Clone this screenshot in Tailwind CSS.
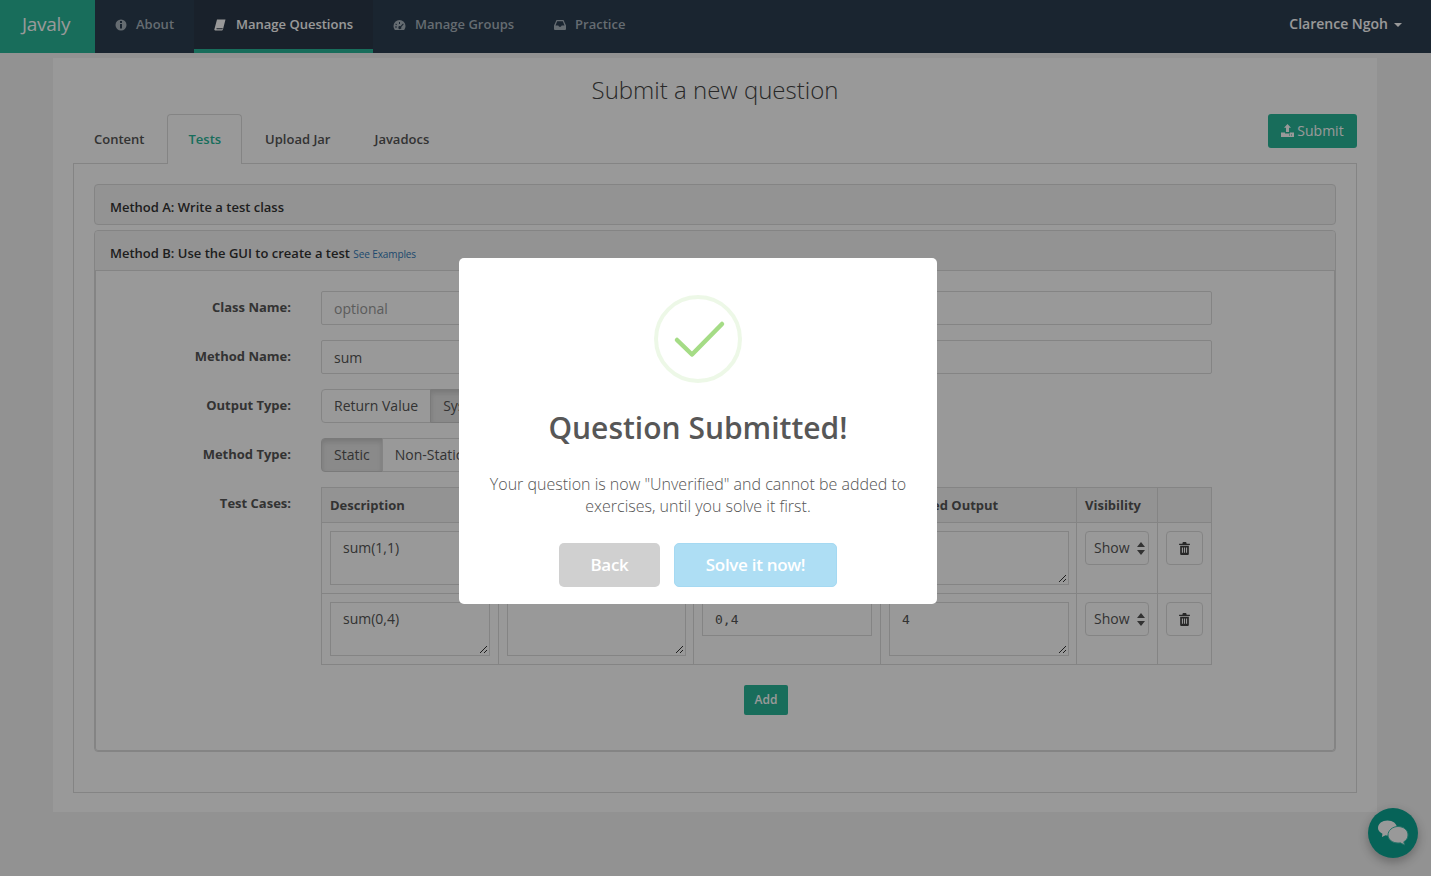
<!DOCTYPE html>
<html lang="en">
<head>
    <meta charset="UTF-8">
    <meta name="viewport" content="width=device-width, initial-scale=1.0">
    <title>Javaly - Submit a new question</title>
    <script src="https://cdn.jsdelivr.net/npm/@tailwindcss/browser@4"></script>
</head>
<body class="bg-[#f4f4f4] h-screen overflow-hidden font-['Open_Sans',sans-serif] text-[#444]">
    <!-- navbar -->
    <nav class="bg-[#2c3e50] h-[53px] flex text-[13px] font-semibold text-[#a9b4bd]">
        <a class="w-[95px] bg-[#28b698] text-[#fff] text-[19px] font-normal tracking-[-0.3px] pl-[22px] leading-[49px]">Javaly</a>
        <a class="flex items-center pl-[20px] pr-[20px] pb-[4px]">
            <svg class="w-[12px] h-[12px] mr-[9px]" viewBox="0 0 12 12"><circle cx="6" cy="6" r="5.5" fill="currentColor"/><rect x="5" y="2" width="2" height="2" fill="#2c3e50"/><rect x="5" y="5" width="2" height="4.5" fill="#2c3e50"/></svg>
            About
        </a>
        <a class="flex items-center w-[179px] pl-[20px] bg-[#2b3848] border-b-[4px] border-[#28b698] text-[#fff]">
            <svg class="w-[12px] h-[12px] mr-[10px]" viewBox="0 0 12 12"><path d="M3 .5h8.500L9 10.200c-.2.8-.7 1.300-1.600 1.300H1.200C.5 11.500.2 11 .4 10.300zM2.600 9.300c-.4.600 0 1 .6 1h5.300l.3-1z" fill="currentColor" fill-rule="evenodd"/></svg>
            Manage Questions
        </a>
        <a class="flex items-center pl-[20px] pr-[20px] pb-[4px]">
            <svg class="w-[13px] h-[12px] mr-[9px]" viewBox="0 0 13 12"><path d="M6.500 1A6 6 0 0 0 .5 7c0 1.500.5 2.800 1.400 4h9.200c.9-1.200 1.400-2.500 1.400-4a6 6 0 0 0-6-6zM6 3h1v2H6zM3 4.500l1 1-.7.7-1-1zM10 4.500l.7.7-2.500 2.700a1.500 1.500 0 1 1-.8-.7zM2 7.500h2v1H2z" fill="currentColor" fill-rule="evenodd"/></svg>
            Manage Groups
        </a>
        <a class="flex items-center pl-[20px] pb-[4px]">
            <svg class="w-[12px] h-[11px] mr-[9px]" viewBox="0 0 12 11"><path d="M2.500 1h7L12 6.500V10a1 1 0 0 1-1 1H1a1 1 0 0 1-1-1V6.500zM3.200 2.200 1.500 6.500h2.800l.8 1.300h1.800l.8-1.300h2.800L8.800 2.200z" fill="currentColor" fill-rule="evenodd"/></svg>
            Practice
        </a>
        <div class="ml-auto flex items-center pr-[29px] text-[14px] text-[#fff] pb-[6px]">
            Clarence Ngoh
            <span class="ml-[6px] mt-[2px] border-x-[4px] border-x-transparent border-t-[4px] border-t-[#fff]"></span>
        </div>
    </nav>

    <main class="w-[1324px] h-[754px] ml-[53px] mt-[5px] bg-white px-[20px] pt-[15px]">
        <h1 class="text-center text-[24px] font-light leading-[34px] text-[#444]">Submit a new question</h1>

        <div class="flex justify-between items-start mt-[7px] h-[50px]">
            <div class="flex text-[13px] font-semibold h-[50px]">
                <a class="px-[21px] mr-[2px] leading-[50px] text-[#555]">Content</a>
                <a class="px-[20px] mr-[2px] leading-[48px] h-[50px] border border-b-0 border-[#ddd] rounded-t-[4px] bg-white text-[#28b698] relative">Tests</a>
                <a class="px-[21px] mr-[2px] leading-[50px] text-[#555]">Upload Jar</a>
                <a class="px-[21px] leading-[50px] text-[#555]">Javadocs</a>
            </div>
            <button class="w-[89px] h-[34px] pb-[1px] bg-[#28b698] rounded-[3px] text-white text-[14px] font-medium flex items-center justify-center gap-[3px]">
                <svg class="w-[13px] h-[13px]" viewBox="0 0 13 13"><path d="M6.500 0 10 3.800H8V8H5V3.800H3zM0 8.500h4V9.500h5V8.500h4V13H0zM10 10.500h1v1h-1zM8 10.500h1v1H8z" fill="currentColor" fill-rule="evenodd"/></svg>
                Submit
            </button>
        </div>

        <div class="h-[630px] -mt-[1px] border border-[#ddd] px-[20px] pt-[20px]">
            <div class="h-[41px] border border-[#ddd] rounded-[4px] bg-[#f5f5f5] pl-[15px] text-[13px] font-semibold leading-[45px] text-[#333]">Method A: Write a test class</div>

            <div class="h-[522px] mt-[5px] border border-[#ddd] rounded-[4px] bg-white">
                <div class="h-[40px] border-b border-[#ddd] bg-[#f5f5f5] rounded-t-[4px] pl-[15px] text-[13px] font-semibold leading-[45px] text-[#333]">Method B: Use the GUI to create a test <a class="text-[10px] font-normal tracking-[-0.1px] text-[#337ab7]">See Examples</a></div>

                <div class="h-[480px] border-x border-b border-[#ddd] rounded-b-[3px] pl-[225px] pt-[20px] relative">
                    <div class="flex h-[34px] mb-[15px]">
                        <label class="absolute left-0 w-[195px] text-right text-[13px] font-bold leading-[32px] text-[#555]">Class Name:</label>
                        <div class="w-[891px] h-[34px] border border-[#ddd] rounded-[2px] px-[12px] text-[14px] leading-[34px] text-[#999]">optional</div>
                    </div>
                    <div class="flex h-[34px] mb-[15px]">
                        <label class="absolute left-0 w-[195px] text-right text-[13px] font-bold leading-[32px] text-[#555]">Method Name:</label>
                        <div class="w-[891px] h-[34px] border border-[#ddd] rounded-[2px] px-[12px] text-[14px] leading-[34px] text-[#555]">sum</div>
                    </div>
                    <div class="flex h-[34px] mb-[15px]">
                        <label class="absolute left-0 w-[195px] text-right text-[13px] font-bold leading-[32px] text-[#555]">Output Type:</label>
                        <div class="flex text-[14px] leading-[32px] text-[#555]">
                            <span class="px-[12px] h-[34px] border border-[#ddd] rounded-l-[4px]">Return Value</span>
                            <span class="px-[12px] h-[34px] border border-[#ccc] bg-[#e6e6e6] shadow-[inset_0_3px_5px_rgba(0,0,0,0.125)] rounded-r-[4px] -ml-[1px]">System Out</span>
                        </div>
                    </div>
                    <div class="flex h-[34px] mb-[15px]">
                        <label class="absolute left-0 w-[195px] text-right text-[13px] font-bold leading-[32px] text-[#555]">Method Type:</label>
                        <div class="flex text-[14px] leading-[32px] text-[#555]">
                            <span class="px-[12px] h-[34px] border border-[#ccc] bg-[#e6e6e6] shadow-[inset_0_3px_5px_rgba(0,0,0,0.125)] rounded-l-[4px]">Static</span>
                            <span class="px-[12px] h-[34px] border border-[#ddd] rounded-r-[4px] -ml-[1px]">Non-Static</span>
                        </div>
                    </div>
                    <div class="flex">
                        <label class="absolute left-0 w-[195px] text-right text-[13px] font-bold leading-[32px] text-[#555]">Test Cases:</label>
                        <div class="w-[891px] border border-[#ddd] text-[14px] text-[#555]">
                            <div class="grid grid-cols-[176px_195px_187px_196px_81px_1fr] h-[35px] bg-[#f5f5f5] border-b border-[#ddd] text-[13px] font-bold leading-[35px]">
                                <div class="pl-[8px]">Description</div>
                                <div class="border-l border-[#ddd]"></div>
                                <div class="border-l border-[#ddd]"></div>
                                <div class="pl-[8px] border-l border-[#ddd]">Expected Output</div>
                                <div class="pl-[8px] border-l border-[#ddd]">Visibility</div>
                                <div class="border-l border-[#ddd]"></div>
                            </div>
                            <div class="grid grid-cols-[176px_195px_187px_196px_81px_1fr] h-[71px] border-b border-[#ddd]">
                                <div class="pl-[8px] pt-[8px]"><div class="w-[160px] h-[54px] border border-[#ddd] px-[12px] pt-[6px] leading-[20px] relative">sum(1,1)<svg class="absolute right-[1px] bottom-[1px] w-[9px] h-[9px]" viewBox="0 0 9 9"><path d="M1 8 8 1M5 8l3-3" stroke="#333" fill="none"/></svg></div></div>
                                <div class="pl-[8px] pt-[8px] border-l border-[#ddd]"><div class="w-[179px] h-[54px] border border-[#ddd] relative"><svg class="absolute right-[1px] bottom-[1px] w-[9px] h-[9px]" viewBox="0 0 9 9"><path d="M1 8 8 1M5 8l3-3" stroke="#333" fill="none"/></svg></div></div>
                                <div class="pl-[8px] pt-[8px] border-l border-[#ddd]"><div class="w-[170px] h-[34px] border border-[#ddd]"></div></div>
                                <div class="pl-[8px] pt-[8px] border-l border-[#ddd]"><div class="w-[180px] h-[54px] border border-[#ddd] relative"><svg class="absolute right-[1px] bottom-[1px] w-[9px] h-[9px]" viewBox="0 0 9 9"><path d="M1 8 8 1M5 8l3-3" stroke="#333" fill="none"/></svg></div></div>
                                <div class="pl-[8px] pt-[8px] border-l border-[#ddd]"><div class="w-[64px] h-[34px] border border-[#ddd] rounded-[4px] pl-[8px] leading-[32px] flex items-center">Show<svg class="w-[8px] h-[13px] ml-[7px]" viewBox="0 0 8 13"><path d="M4 0 8 5H0zM4 13 0 8h8z" fill="#555"/></svg></div></div>
                                <div class="pl-[8px] pt-[8px] border-l border-[#ddd]"><div class="w-[37px] h-[34px] border border-[#ddd] rounded-[4px] flex items-center justify-center"><svg class="w-[11px] h-[13px]" viewBox="0 0 10 12"><path d="M3.500 0h3l.5 1.500h3v1.200H0V1.500h3zM1 3.500h8V11a1 1 0 0 1-1 1H2a1 1 0 0 1-1-1zM2.600 5v5h1V5zM4.500 5v5h1V5zM6.400 5v5h1V5z" fill="#444" fill-rule="evenodd"/></svg></div></div>
                            </div>
                            <div class="grid grid-cols-[176px_195px_187px_196px_81px_1fr] h-[70px]">
                                <div class="pl-[8px] pt-[8px]"><div class="w-[160px] h-[54px] border border-[#ddd] px-[12px] pt-[6px] leading-[20px] relative">sum(0,4)<svg class="absolute right-[1px] bottom-[1px] w-[9px] h-[9px]" viewBox="0 0 9 9"><path d="M1 8 8 1M5 8l3-3" stroke="#333" fill="none"/></svg></div></div>
                                <div class="pl-[8px] pt-[8px] border-l border-[#ddd]"><div class="w-[179px] h-[54px] border border-[#ddd] relative"><svg class="absolute right-[1px] bottom-[1px] w-[9px] h-[9px]" viewBox="0 0 9 9"><path d="M1 8 8 1M5 8l3-3" stroke="#333" fill="none"/></svg></div></div>
                                <div class="pl-[8px] pt-[8px] border-l border-[#ddd]"><div class="w-[170px] h-[34px] border border-[#ddd] px-[12px] font-['DejaVu_Sans_Mono',monospace] text-[13px] leading-[34px]">0,4</div></div>
                                <div class="pl-[8px] pt-[8px] border-l border-[#ddd]"><div class="w-[180px] h-[54px] border border-[#ddd] px-[12px] pt-[7px] font-['DejaVu_Sans_Mono',monospace] text-[13px] leading-[20px] relative">4<svg class="absolute right-[1px] bottom-[1px] w-[9px] h-[9px]" viewBox="0 0 9 9"><path d="M1 8 8 1M5 8l3-3" stroke="#333" fill="none"/></svg></div></div>
                                <div class="pl-[8px] pt-[8px] border-l border-[#ddd]"><div class="w-[64px] h-[34px] border border-[#ddd] rounded-[4px] pl-[8px] leading-[32px] flex items-center">Show<svg class="w-[8px] h-[13px] ml-[7px]" viewBox="0 0 8 13"><path d="M4 0 8 5H0zM4 13 0 8h8z" fill="#555"/></svg></div></div>
                                <div class="pl-[8px] pt-[8px] border-l border-[#ddd]"><div class="w-[37px] h-[34px] border border-[#ddd] rounded-[4px] flex items-center justify-center"><svg class="w-[11px] h-[13px]" viewBox="0 0 10 12"><path d="M3.500 0h3l.5 1.500h3v1.200H0V1.500h3zM1 3.500h8V11a1 1 0 0 1-1 1H2a1 1 0 0 1-1-1zM2.600 5v5h1V5zM4.500 5v5h1V5zM6.400 5v5h1V5z" fill="#444" fill-rule="evenodd"/></svg></div></div>
                            </div>
                        </div>
                    </div>
                    <div class="w-[889px] flex justify-center mt-[20px]">
                        <button class="w-[44px] h-[30px] bg-[#28b698] rounded-[2px] text-white text-[12px] font-semibold pl-[1px]">Add</button>
                    </div>
                </div>
            </div>
        </div>
    </main>

    <!-- chat bubble -->
    <div class="fixed left-[1368px] top-[808px] w-[50px] h-[50px] rounded-full bg-[#0aa593] shadow-[0_4px_12px_rgba(0,0,0,0.3)] flex items-center justify-center">
        <svg class="w-[32px] h-[26px]" viewBox="0 0 32 26">
            <path d="M10.500 0.500c5.300 0 9.500 3.100 9.500 7.500s-4.200 7.500-9.500 7.500c-.7 0-1.400 0-2-.2L5 17l.4-3.300C2.700 12.400 1 10.300 1 8 1 3.600 5.200.5 10.500.5z" fill="#fff"/>
            <path d="M21 6.500c5.500 0 10 3.500 10 8.500 0 3-1.700 5.400-4.200 6.800l.7 3.200-4.200-2.200c-.8.200-1.500.2-2.300.2-5.500 0-10-3.500-10-8s4.500-8.500 10-8.500z" fill="#fff" stroke="#3dc0ae"/>
        </svg>
    </div>

    <!-- modal overlay -->
    <div class="fixed inset-0 bg-black/40"></div>
    <div class="fixed left-[459px] top-[258px] w-[478px] h-[346px] bg-white rounded-[5px] text-center">
        <div class="w-[88px] h-[88px] mt-[37px] ml-[195px] rounded-full border-[4px] border-[#a5dc86]/20">
            <svg class="w-[80px] h-[80px]" viewBox="0 0 80 80"><path d="M19 41 34 55.500 64 25" stroke="#a5dc86" stroke-width="4.500" fill="none" stroke-linecap="round" stroke-linejoin="round"/></svg>
        </div>
        <h2 class="mt-[25px] text-[30px] font-semibold leading-[40px] text-[#575757]">Question Submitted!</h2>
        <p class="mt-[25px] text-[16px] font-light leading-[22px] text-[#555] px-[20px]">Your question is now "Unverified" and cannot be added to exercises, until you solve it first.</p>
        <div class="flex justify-center gap-[14px] mt-[26px] text-[17px] font-semibold text-white tracking-[-0.3px]">
            <button class="w-[101px] h-[44px] bg-[#d0d0d0] rounded-[5px]">Back</button>
            <button class="w-[163px] h-[44px] bg-[#aedef4] border border-[#a5d9f2] rounded-[5px]">Solve it now!</button>
        </div>
    </div>
</body>
</html>
